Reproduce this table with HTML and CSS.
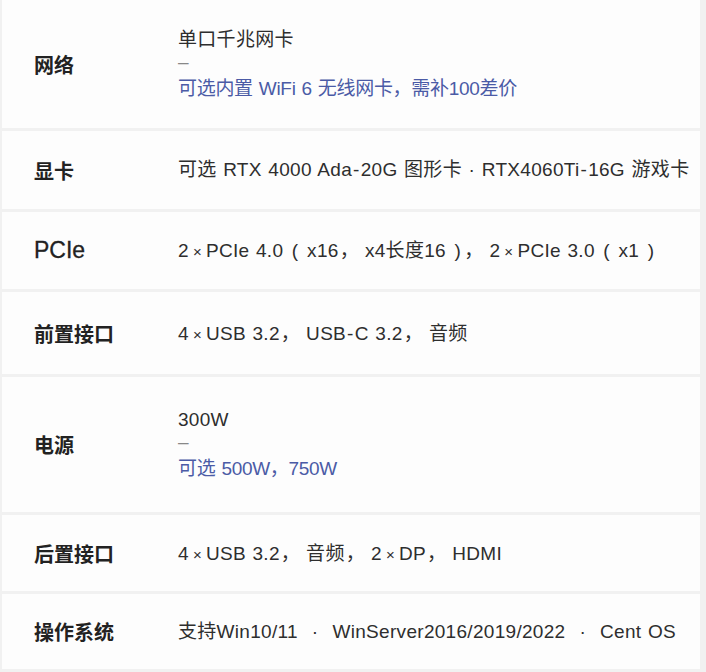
FILE: index.html
```html
<!DOCTYPE html>
<html lang="zh-CN">
<head>
<meta charset="utf-8">
<link rel="stylesheet" href="styles.css">
</head>
<body>
<div class="table">
  <div class="row h1">
    <div class="label">网络</div>
    <div class="value">
      <div>单口千兆网卡</div>
      <div class="dash">–</div>
      <div class="blue">可选内置 WiFi 6 无线网卡<span class="c">，</span>需补100差价</div>
    </div>
  </div>
  <div class="row h2">
    <div class="label">显卡</div>
    <div class="value">可选 RTX 4000 Ada<span class="hy">-</span>20G 图形卡 · RTX4060Ti<span class="hy">-</span>16G 游戏卡</div>
  </div>
  <div class="row h3">
    <div class="label latin">PCIe</div>
    <div class="value">2<span class="x">×</span>PCIe 4.0 <span class="p">(</span> x16<span class="c">，</span>x4长度16 <span class="p">)</span><span class="c">，</span>2<span class="x">×</span>PCIe 3.0 <span class="p">(</span> x1 <span class="p">)</span></div>
  </div>
  <div class="row h4">
    <div class="label">前置接口</div>
    <div class="value">4<span class="x">×</span>USB 3.2<span class="c">，</span>USB<span class="hy">-</span>C 3.2<span class="c">，</span>音频</div>
  </div>
  <div class="row h5">
    <div class="label">电源</div>
    <div class="value">
      <div>300W</div>
      <div class="dash">–</div>
      <div class="blue">可选 500W<span class="c">，</span>750W</div>
    </div>
  </div>
  <div class="row h6">
    <div class="label">后置接口</div>
    <div class="value">4<span class="x">×</span>USB 3.2<span class="c">，</span>音频<span class="c">，</span>2<span class="x">×</span>DP<span class="c">，</span>HDMI</div>
  </div>
  <div class="row h7">
    <div class="label">操作系统</div>
    <div class="value">支持Win10/11<span class="dot">·</span>WinServer2016/2019/2022<span class="dot">·</span>Cent OS</div>
  </div>
</div>
</body>
</html>
```

FILE: styles.css
```css
html, body {
  margin: 0;
  padding: 0;
  background: #f1f1f1;
}
body {
  width: 706px;
  height: 672px;
  overflow: hidden;
  font-family: "Liberation Sans", "Noto Sans CJK SC", sans-serif;
}
.table {
  display: flex;
  flex-direction: column;
  gap: 3px;
  padding: 0 6px 0 2px;
}
.row {
  background: #fdfdfd;
  display: grid;
  grid-template-columns: 144px 1fr;
  align-items: center;
  padding-left: 32px;
}
.h1 { height: 128px; }
.h2 { height: 78px; }
.h3 { height: 77px; }
.h4 { height: 82px; }
.h5 { height: 135px; }
.h6 { height: 76px; }
.h7 { height: 75px; }
.label {
  font-size: 20px;
  font-weight: bold;
  color: #222;
  font-family: "Noto Sans CJK SC", sans-serif;
}
.label.latin {
  font-family: "Liberation Sans", sans-serif;
  font-weight: normal;
  font-size: 23px;
  -webkit-text-stroke: 0.3px #222;
}
.value {
  font-size: 19px;
  color: #2e2e2e;
  line-height: 22px;
  white-space: nowrap;
  letter-spacing: 0.3px;
  word-spacing: 1px;
}
.x {
  margin: 0 4px;
  font-size: 15px;
}
.c {
  font-family: "Noto Sans CJK SC", sans-serif;
  margin: 0 6px 0 1px;
}
.p {
  margin: 0 2px;
}
.hy {
  display: inline-block;
  margin: 0 1px;
}
.dot {
  margin: 0 14px;
}
.dash {
  color: #888;
}
.blue {
  color: #4b5ba6;
  margin-top: 3px;
  letter-spacing: -0.3px;
}
.blue .c {
  margin: 0;
}
```
